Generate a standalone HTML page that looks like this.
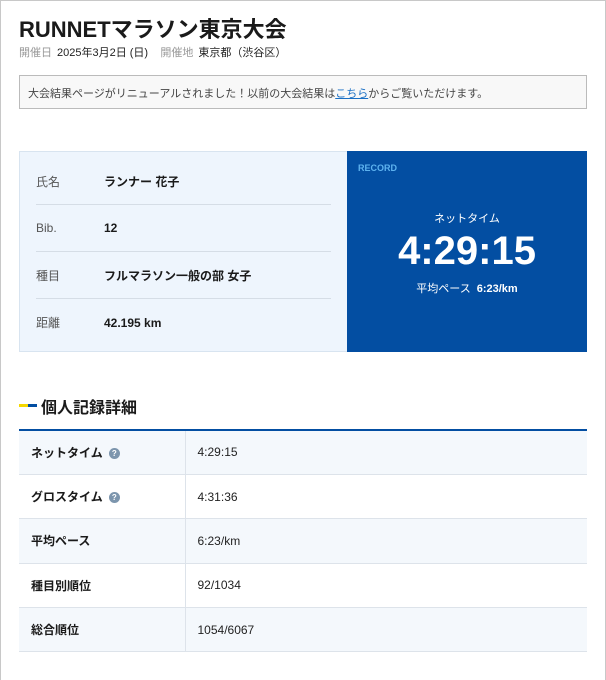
<!DOCTYPE html><html><head><meta charset="utf-8"><style>
*{box-sizing:border-box;margin:0;padding:0}
body{width:606px;height:680px;background:#fff;font-family:"Liberation Sans","Noto Sans CJK JP",sans-serif;color:#222;position:relative;overflow:hidden}
.frame{position:absolute;left:0;top:0;width:606px;height:680px;border:1px solid #c8c8c8;border-bottom:none}
h1{position:absolute;left:19px;top:12px;font-size:22px;font-weight:bold;color:#1a1a1a}
.meta{position:absolute;left:19px;top:44px;font-size:11px;color:#222}
.meta .l{color:#999;margin-right:5px}
.notice{position:absolute;left:19px;top:75px;width:568px;height:34px;border:1px solid #bbb;background:#f8f8f8;font-size:11px;color:#444;padding:9px 8px}
.notice a{color:#1a6fc4;text-decoration:underline}
.card{position:absolute;left:19px;top:151px;width:568px;height:201px;display:flex}
.cl{width:328px;background:#eef5fd;border:1px solid #d8e4f0;border-right:none;padding:6px 16px 0 16px}
.row{height:47px;border-bottom:1px solid #d5dde6;display:flex;align-items:center;font-size:12px}
.row:last-child{border-bottom:none}
.row .k{width:68px;color:#555}
.row .v{font-weight:bold;color:#1a1a1a}
.cr{flex:1;background:#034ea2;color:#fff;position:relative;text-align:center}
.rec{position:absolute;left:11px;top:12px;font-size:9px;font-weight:bold;color:#5eb3f0}
.nt{position:absolute;top:59px;width:100%;font-size:11px}
.big{position:absolute;top:78px;width:100%;font-size:40px;font-weight:bold;letter-spacing:0}
.pace{position:absolute;top:129px;width:100%;font-size:11px}
.pace b{margin-left:6px}
.sec{position:absolute;left:19px;top:394px;font-size:16px;font-weight:bold;color:#1a1a1a;padding-left:22px}
.sec:before{content:"";position:absolute;left:0;top:10px;width:9px;height:3px;background:#f5d800}
.sec:after{content:"";position:absolute;left:9px;top:10px;width:9px;height:3px;background:#034ea2}
table{position:absolute;left:19px;top:429px;width:568px;border-collapse:collapse;border-top:2px solid #034ea2;font-size:12px}
td{height:44.4px;border-bottom:1px solid #dde3ea;padding-left:12px}
td:first-child{width:166px;font-weight:bold;border-right:1px solid #dde3ea;color:#1a1a1a}
tr:nth-child(odd){background:#f4f8fc}
.q{display:inline-block;width:11px;height:11px;border-radius:50%;background:#7c95ad;color:#fff;font-size:8px;text-align:center;line-height:11px;margin-left:6px;vertical-align:1px}
</style></head><body><div class="frame"></div>
<h1>RUNNETマラソン東京大会</h1>
<div class="meta"><span class="l">開催日</span>2025年3月2日 (日)&nbsp;&nbsp;&nbsp;&nbsp;<span class="l">開催地</span>東京都（渋谷区）</div>
<div class="notice">大会結果ページがリニューアルされました！以前の大会結果は<a>こちら</a>からご覧いただけます。</div>
<div class="card"><div class="cl">
<div class="row"><span class="k">氏名</span><span class="v">ランナー 花子</span></div>
<div class="row"><span class="k">Bib.</span><span class="v">12</span></div>
<div class="row"><span class="k">種目</span><span class="v">フルマラソン一般の部 女子</span></div>
<div class="row"><span class="k">距離</span><span class="v">42.195 km</span></div>
</div><div class="cr"><div class="rec">RECORD</div><div class="nt">ネットタイム</div><div class="big">4:29:15</div><div class="pace">平均ペース<b>6:23/km</b></div></div></div>
<div class="sec">個人記録詳細</div>
<table>
<tr><td>ネットタイム<span class="q">?</span></td><td>4:29:15</td></tr>
<tr><td>グロスタイム<span class="q">?</span></td><td>4:31:36</td></tr>
<tr><td>平均ペース</td><td>6:23/km</td></tr>
<tr><td>種目別順位</td><td>92/1034</td></tr>
<tr><td>総合順位</td><td>1054/6067</td></tr>
</table>
</body></html>
